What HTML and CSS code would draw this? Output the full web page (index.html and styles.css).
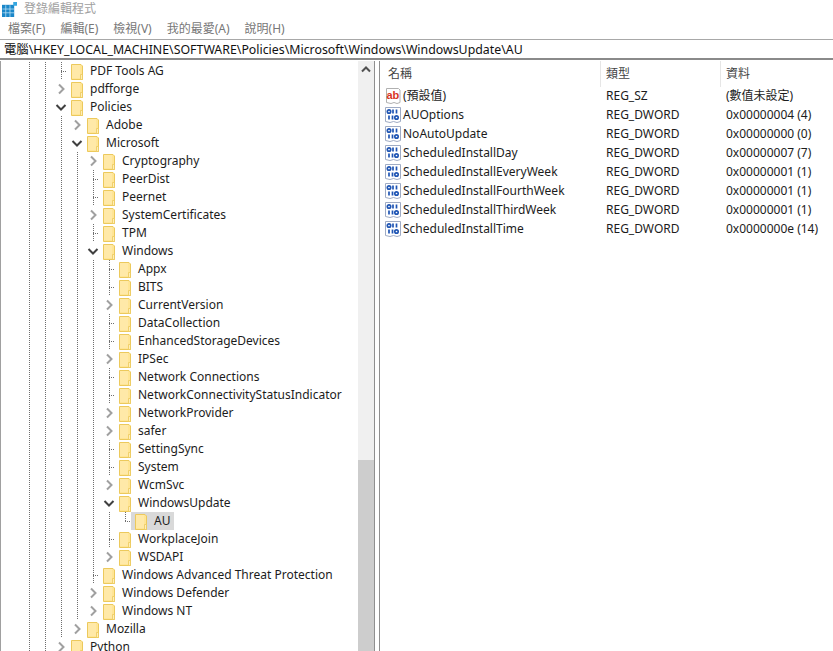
FILE: index.html
```html
<!DOCTYPE html>
<html lang="zh-Hant">
<head>
<meta charset="utf-8">
<title>登錄編輯程式</title>
<link rel="stylesheet" href="styles.css">
</head>
<body>
<svg class="defs" xmlns="http://www.w3.org/2000/svg">
  <symbol id="folder" viewBox="0 0 12 16">
    <path d="M.5.5h9.500l1.500 1.500v13.500h-11z" fill="#ffe595" stroke="#ecc95c"/>
    <path d="M1 1h8v13H1z" fill="#ffe9a8"/>
    <path d="M9.500 10.500h2v5h-2z" fill="#ffeeb8" stroke="#ecc95c" stroke-width=".8"/>
  </symbol>
  <symbol id="right" viewBox="0 0 16 18">
    <path d="M6 4.500 10.500 9 6 13.500" fill="none" stroke="#a0a0a0" stroke-width="2"/>
  </symbol>
  <symbol id="down" viewBox="0 0 16 18">
    <path d="M3.500 7 8 11.500 12.500 7" fill="none" stroke="#404040" stroke-width="2"/>
  </symbol>
  <symbol id="ab" viewBox="0 0 16 16">
    <path d="M1.500 .5h12l1.500 1.500v12.500l-3 1-3-1-3 1-4.500-1z" fill="#fff" stroke="#b0b0b0"/>
    <text x="1.500" y="10.500" class="abtext">ab</text>
  </symbol>
  <symbol id="bin" viewBox="0 0 16 16">
    <path d="M.5 .5h15v14l-3.500 1-3.500-1-3.500 1-4.500-1z" fill="#fff" stroke="#9fabc4"/>
    <g fill="none" stroke="#1f55b4" stroke-width="1.700">
      <circle cx="4" cy="4.500" r="1.700"/>
      <path d="M8 2.500v4M11.500 2.500v4M4 8.500v4M7.500 8.500v4"/>
      <circle cx="11.500" cy="10.500" r="1.700"/>
    </g>
  </symbol>
</svg>

<header class="title">
  <svg class="appicon" viewBox="0 0 16 16" xmlns="http://www.w3.org/2000/svg">
    <path d="M0 3h13v13H0z" fill="#1b87c9"/>
    <path d="M4 3.500v12.500M8.500 3.500v12.500M.5 7.500h12.500M.5 11.500h12.500" stroke="#bfe3f5" stroke-width=".8"/>
    <rect x="12" y="0" width="4" height="4" fill="#35a7e0"/>
  </svg>
  <span>登錄編輯程式</span>
</header>

<nav class="menu">
  <span>檔案(F)</span><span>編輯(E)</span><span>檢視(V)</span><span>我的最愛(A)</span><span>說明(H)</span>
</nav>

<div class="address">電腦\HKEY_LOCAL_MACHINE\SOFTWARE\Policies\Microsoft\Windows\WindowsUpdate\AU</div>

<main class="main">
  <section class="treepane">
    <div class="tree">
      <div class="row"><i class="g"></i><i class="g"></i><i class="e s"></i><span class="node"><svg class="fo"><use href="#folder"/></svg><b>PDF Tools AG</b></span></div>
      <div class="row"><i class="g"></i><i class="g"></i><i class="e"><svg class="ch"><use href="#right"/></svg></i><span class="node"><svg class="fo"><use href="#folder"/></svg><b>pdfforge</b></span></div>
      <div class="row"><i class="g"></i><i class="g"></i><i class="e"><svg class="ch"><use href="#down"/></svg></i><span class="node"><svg class="fo"><use href="#folder"/></svg><b>Policies</b></span></div>
      <div class="row"><i class="g"></i><i class="g"></i><i class="g"></i><i class="e"><svg class="ch"><use href="#right"/></svg></i><span class="node"><svg class="fo"><use href="#folder"/></svg><b>Adobe</b></span></div>
      <div class="row"><i class="g"></i><i class="g"></i><i class="g"></i><i class="e"><svg class="ch"><use href="#down"/></svg></i><span class="node"><svg class="fo"><use href="#folder"/></svg><b>Microsoft</b></span></div>
      <div class="row"><i class="g"></i><i class="g"></i><i class="g"></i><i class="g"></i><i class="e"><svg class="ch"><use href="#right"/></svg></i><span class="node"><svg class="fo"><use href="#folder"/></svg><b>Cryptography</b></span></div>
      <div class="row"><i class="g"></i><i class="g"></i><i class="g"></i><i class="g"></i><i class="e s"></i><span class="node"><svg class="fo"><use href="#folder"/></svg><b>PeerDist</b></span></div>
      <div class="row"><i class="g"></i><i class="g"></i><i class="g"></i><i class="g"></i><i class="e s"></i><span class="node"><svg class="fo"><use href="#folder"/></svg><b>Peernet</b></span></div>
      <div class="row"><i class="g"></i><i class="g"></i><i class="g"></i><i class="g"></i><i class="e"><svg class="ch"><use href="#right"/></svg></i><span class="node"><svg class="fo"><use href="#folder"/></svg><b>SystemCertificates</b></span></div>
      <div class="row"><i class="g"></i><i class="g"></i><i class="g"></i><i class="g"></i><i class="e s"></i><span class="node"><svg class="fo"><use href="#folder"/></svg><b>TPM</b></span></div>
      <div class="row"><i class="g"></i><i class="g"></i><i class="g"></i><i class="g"></i><i class="e"><svg class="ch"><use href="#down"/></svg></i><span class="node"><svg class="fo"><use href="#folder"/></svg><b>Windows</b></span></div>
      <div class="row"><i class="g"></i><i class="g"></i><i class="g"></i><i class="g"></i><i class="g"></i><i class="e s"></i><span class="node"><svg class="fo"><use href="#folder"/></svg><b>Appx</b></span></div>
      <div class="row"><i class="g"></i><i class="g"></i><i class="g"></i><i class="g"></i><i class="g"></i><i class="e s"></i><span class="node"><svg class="fo"><use href="#folder"/></svg><b>BITS</b></span></div>
      <div class="row"><i class="g"></i><i class="g"></i><i class="g"></i><i class="g"></i><i class="g"></i><i class="e"><svg class="ch"><use href="#right"/></svg></i><span class="node"><svg class="fo"><use href="#folder"/></svg><b>CurrentVersion</b></span></div>
      <div class="row"><i class="g"></i><i class="g"></i><i class="g"></i><i class="g"></i><i class="g"></i><i class="e s"></i><span class="node"><svg class="fo"><use href="#folder"/></svg><b>DataCollection</b></span></div>
      <div class="row"><i class="g"></i><i class="g"></i><i class="g"></i><i class="g"></i><i class="g"></i><i class="e s"></i><span class="node"><svg class="fo"><use href="#folder"/></svg><b>EnhancedStorageDevices</b></span></div>
      <div class="row"><i class="g"></i><i class="g"></i><i class="g"></i><i class="g"></i><i class="g"></i><i class="e"><svg class="ch"><use href="#right"/></svg></i><span class="node"><svg class="fo"><use href="#folder"/></svg><b>IPSec</b></span></div>
      <div class="row"><i class="g"></i><i class="g"></i><i class="g"></i><i class="g"></i><i class="g"></i><i class="e s"></i><span class="node"><svg class="fo"><use href="#folder"/></svg><b>Network Connections</b></span></div>
      <div class="row"><i class="g"></i><i class="g"></i><i class="g"></i><i class="g"></i><i class="g"></i><i class="e s"></i><span class="node"><svg class="fo"><use href="#folder"/></svg><b>NetworkConnectivityStatusIndicator</b></span></div>
      <div class="row"><i class="g"></i><i class="g"></i><i class="g"></i><i class="g"></i><i class="g"></i><i class="e"><svg class="ch"><use href="#right"/></svg></i><span class="node"><svg class="fo"><use href="#folder"/></svg><b>NetworkProvider</b></span></div>
      <div class="row"><i class="g"></i><i class="g"></i><i class="g"></i><i class="g"></i><i class="g"></i><i class="e"><svg class="ch"><use href="#right"/></svg></i><span class="node"><svg class="fo"><use href="#folder"/></svg><b>safer</b></span></div>
      <div class="row"><i class="g"></i><i class="g"></i><i class="g"></i><i class="g"></i><i class="g"></i><i class="e s"></i><span class="node"><svg class="fo"><use href="#folder"/></svg><b>SettingSync</b></span></div>
      <div class="row"><i class="g"></i><i class="g"></i><i class="g"></i><i class="g"></i><i class="g"></i><i class="e s"></i><span class="node"><svg class="fo"><use href="#folder"/></svg><b>System</b></span></div>
      <div class="row"><i class="g"></i><i class="g"></i><i class="g"></i><i class="g"></i><i class="g"></i><i class="e"><svg class="ch"><use href="#right"/></svg></i><span class="node"><svg class="fo"><use href="#folder"/></svg><b>WcmSvc</b></span></div>
      <div class="row"><i class="g"></i><i class="g"></i><i class="g"></i><i class="g"></i><i class="g"></i><i class="e"><svg class="ch"><use href="#down"/></svg></i><span class="node"><svg class="fo"><use href="#folder"/></svg><b>WindowsUpdate</b></span></div>
      <div class="row"><i class="g"></i><i class="g"></i><i class="g"></i><i class="g"></i><i class="g"></i><i class="g"></i><i class="e s l"></i><span class="node sel"><svg class="fo"><use href="#folder"/></svg><b>AU</b></span></div>
      <div class="row"><i class="g"></i><i class="g"></i><i class="g"></i><i class="g"></i><i class="g"></i><i class="e s"></i><span class="node"><svg class="fo"><use href="#folder"/></svg><b>WorkplaceJoin</b></span></div>
      <div class="row"><i class="g"></i><i class="g"></i><i class="g"></i><i class="g"></i><i class="g"></i><i class="e"><svg class="ch"><use href="#right"/></svg></i><span class="node"><svg class="fo"><use href="#folder"/></svg><b>WSDAPI</b></span></div>
      <div class="row"><i class="g"></i><i class="g"></i><i class="g"></i><i class="g"></i><i class="e s"></i><span class="node"><svg class="fo"><use href="#folder"/></svg><b>Windows Advanced Threat Protection</b></span></div>
      <div class="row"><i class="g"></i><i class="g"></i><i class="g"></i><i class="g"></i><i class="e"><svg class="ch"><use href="#right"/></svg></i><span class="node"><svg class="fo"><use href="#folder"/></svg><b>Windows Defender</b></span></div>
      <div class="row"><i class="g"></i><i class="g"></i><i class="g"></i><i class="g"></i><i class="e"><svg class="ch"><use href="#right"/></svg></i><span class="node"><svg class="fo"><use href="#folder"/></svg><b>Windows NT</b></span></div>
      <div class="row"><i class="g"></i><i class="g"></i><i class="g"></i><i class="e"><svg class="ch"><use href="#right"/></svg></i><span class="node"><svg class="fo"><use href="#folder"/></svg><b>Mozilla</b></span></div>
      <div class="row"><i class="g"></i><i class="g"></i><i class="e"><svg class="ch"><use href="#right"/></svg></i><span class="node"><svg class="fo"><use href="#folder"/></svg><b>Python</b></span></div>
    </div>
    <div class="scrollbar">
      <svg class="up" viewBox="0 0 16 16" xmlns="http://www.w3.org/2000/svg"><path d="M4 10 8 6l4 4" fill="none" stroke="#505050" stroke-width="2"/></svg>
      <div class="thumb"></div>
    </div>
  </section>
  <section class="list">
    <div class="lrow head"><span class="c1">名稱</span><span class="c2">類型</span><span class="c3">資料</span></div>
    <div class="lrow"><span class="c1"><svg class="ic"><use href="#ab"/></svg>(預設值)</span><span class="c2">REG_SZ</span><span class="c3">(數值未設定)</span></div>
    <div class="lrow"><span class="c1"><svg class="ic"><use href="#bin"/></svg>AUOptions</span><span class="c2">REG_DWORD</span><span class="c3">0x00000004 (4)</span></div>
    <div class="lrow"><span class="c1"><svg class="ic"><use href="#bin"/></svg>NoAutoUpdate</span><span class="c2">REG_DWORD</span><span class="c3">0x00000000 (0)</span></div>
    <div class="lrow"><span class="c1"><svg class="ic"><use href="#bin"/></svg>ScheduledInstallDay</span><span class="c2">REG_DWORD</span><span class="c3">0x00000007 (7)</span></div>
    <div class="lrow"><span class="c1"><svg class="ic"><use href="#bin"/></svg>ScheduledInstallEveryWeek</span><span class="c2">REG_DWORD</span><span class="c3">0x00000001 (1)</span></div>
    <div class="lrow"><span class="c1"><svg class="ic"><use href="#bin"/></svg>ScheduledInstallFourthWeek</span><span class="c2">REG_DWORD</span><span class="c3">0x00000001 (1)</span></div>
    <div class="lrow"><span class="c1"><svg class="ic"><use href="#bin"/></svg>ScheduledInstallThirdWeek</span><span class="c2">REG_DWORD</span><span class="c3">0x00000001 (1)</span></div>
    <div class="lrow"><span class="c1"><svg class="ic"><use href="#bin"/></svg>ScheduledInstallTime</span><span class="c2">REG_DWORD</span><span class="c3">0x0000000e (14)</span></div>
  </section>
</main>
</body>
</html>
```
FILE: styles.css
```css
* { box-sizing: border-box; }
html, body { margin: 0; height: 100%; }
body {
  height: 100vh;
  overflow: hidden;
  display: flex;
  flex-direction: column;
  background: #fff;
  color: #1c1c1c;
  font: 12px/18px "Noto Sans", "Noto Sans CJK TC", sans-serif;
}
.defs { display: none; }
.abtext { font: bold 11px "Liberation Sans", sans-serif; fill: #d8361f; }

.title { height: 18px; display: flex; align-items: center; gap: 7px; padding-left: 2px; color: #a0a0a0; flex: none; }
.appicon { width: 15px; height: 15px; }
.menu { height: 21px; flex: none; display: flex; align-items: center; gap: 15px; padding-left: 8px; color: #777; }
.address {
  height: 21px;
  flex: none;
  padding: 0 0 0 4px;
  line-height: 20px;
  font-size: 12.35px;
  color: #111;
  border-top: 1px solid #a8a8a8;
  border-bottom: 2px solid #8a8a8a;
  white-space: nowrap;
}

.main { flex: 1; min-height: 0; display: flex; }
.treepane { width: 375px; flex: none; display: flex; border-left: 1px solid #a0a0a0; border-right: 1px solid #8f8f8f; margin-top: 1px; }
.tree { flex: 1; min-width: 0; overflow: hidden; padding: 1px 0 0 20px; }
.row { height: 18px; display: flex; align-items: stretch; white-space: nowrap; }
.row i { display: block; flex: none; }
.g, .s {
  background: linear-gradient(#6e6e6e 50%, transparent 50%) 8px 0 / 1px 2px repeat-y;
}
.g { width: 16px; }
.e { width: 14px; }
.s::after {
  content: "";
  display: block;
  margin: 9px 0 0 8px;
  width: 6px;
  height: 1px;
  background: linear-gradient(90deg, #6e6e6e 50%, transparent 50%) 0 0 / 2px 1px repeat-x;
}
.l { background: none; }
.l::before {
  content: "";
  display: block;
  margin-left: 8px;
  width: 1px;
  height: 9px;
  background: linear-gradient(#6e6e6e 50%, transparent 50%) 0 0 / 1px 2px repeat-y;
}
.l::after { margin-top: 0; }
.ch { width: 16px; height: 18px; display: block; }
.node { display: flex; align-items: center; padding: 0 4px 0 4px; }
.node b { font-weight: 400; margin-left: 7px; }
.sel { background: #d9d9d9; }
.fo { width: 12px; height: 16px; flex: none; margin-top: 2px; }

.scrollbar { width: 16px; flex: none; background: #f0f0f0; display: flex; flex-direction: column; justify-content: space-between; }
.up { width: 16px; height: 17px; display: block; }
.thumb { height: 191px; background: #cdcdcd; }

.list { flex: 1; min-width: 0; border-left: 1px solid #8f8f8f; margin-left: 4px; margin-top: 1px; }
.lrow { display: grid; grid-template-columns: 220px 120px 1fr; height: 19px; line-height: 19px; white-space: nowrap; }
.head { height: 25px; line-height: 26px; color: #444; }
.head .c1 { display: block; padding-left: 8px; }
.head span + span { box-shadow: inset 1px 0 0 #e6e6e6; }
.c1 { display: flex; align-items: center; padding-left: 5px; }
.c2, .c3 { padding-left: 6px; }
.ic { width: 16px; height: 16px; flex: none; margin-right: 2px; }
```
